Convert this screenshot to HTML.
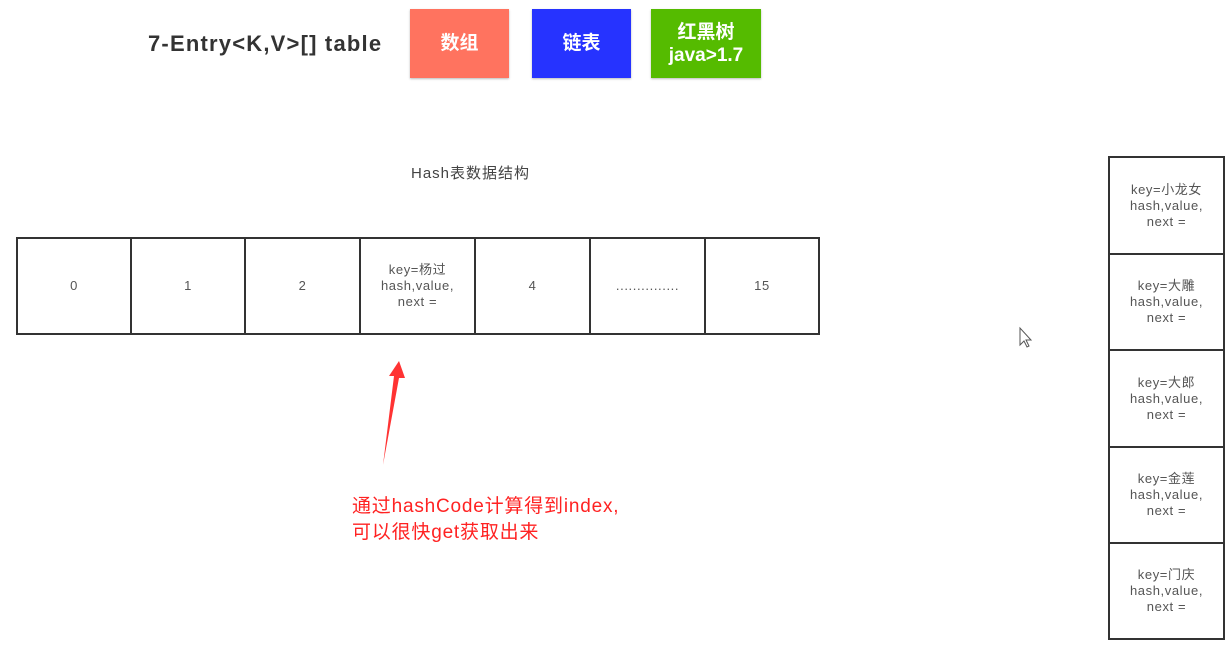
<!DOCTYPE html>
<html><head><meta charset="utf-8"><style>
body{margin:0;width:1230px;height:646px;background:#fff;position:relative;overflow:hidden;font-family:"Liberation Sans","Noto Sans CJK SC",sans-serif}
.a{position:absolute}
.btn{position:absolute;top:9px;height:69px;color:#fff;font-weight:bold;font-size:19px;display:flex;align-items:center;justify-content:center;text-align:center;line-height:23px;box-shadow:0 1px 2px #bbb}
.c{position:absolute;border:2px solid #333;box-sizing:border-box;display:flex;align-items:center;justify-content:center;text-align:center;font-size:13px;letter-spacing:0.6px;color:#555;line-height:16px}
</style></head><body>
<div class="a" style="left:148px;top:31px;font-size:22px;letter-spacing:1.2px;font-weight:bold;color:#333">7-Entry&lt;K,V&gt;[] table</div>
<div class="btn" style="left:410px;width:99px;background:#ff735f">数组</div>
<div class="btn" style="left:532px;width:99px;background:#2633ff">链表</div>
<div class="btn" style="left:651px;width:110px;background:#55bb00">红黑树<br>java&gt;1.7</div>
<div class="a" style="left:411px;top:162px;font-size:15px;letter-spacing:1px;color:#444">Hash表数据结构</div>
<div class="c" style="left:16px;top:237px;width:116px;height:98px">0</div>
<div class="c" style="left:130px;top:237px;width:116px;height:98px">1</div>
<div class="c" style="left:244px;top:237px;width:117px;height:98px">2</div>
<div class="c" style="left:359px;top:237px;width:117px;height:98px">key=杨过<br>hash,value,<br>next =</div>
<div class="c" style="left:474px;top:237px;width:117px;height:98px">4</div>
<div class="c" style="left:589px;top:237px;width:117px;height:98px">...............</div>
<div class="c" style="left:704px;top:237px;width:116px;height:98px">15</div>
<div class="c" style="left:1108px;top:156px;width:117px;height:99px">key=小龙女<br>hash,value,<br>next =</div>
<div class="c" style="left:1108px;top:253px;width:117px;height:98px">key=大雕<br>hash,value,<br>next =</div>
<div class="c" style="left:1108px;top:349px;width:117px;height:99px">key=大郎<br>hash,value,<br>next =</div>
<div class="c" style="left:1108px;top:446px;width:117px;height:98px">key=金莲<br>hash,value,<br>next =</div>
<div class="c" style="left:1108px;top:542px;width:117px;height:98px">key=门庆<br>hash,value,<br>next =</div>
<svg class="a" style="left:0;top:0" width="1230" height="646">
<path d="M383 465 L394 376 L389 376 L399 361 L405 378 L399 378 Z" fill="#ff3333"/>
<path d="M1020 328 L1020 345 L1024 341 L1027 347 L1029 346 L1026 340 L1031 340 Z" fill="#fff" stroke="#555" stroke-width="1"/>
</svg>
<div class="a" style="left:352px;top:494px;font-size:19px;letter-spacing:0.8px;color:#ff2222;line-height:26px">通过hashCode计算得到index,<br>可以很快get获取出来</div>
</body></html>
